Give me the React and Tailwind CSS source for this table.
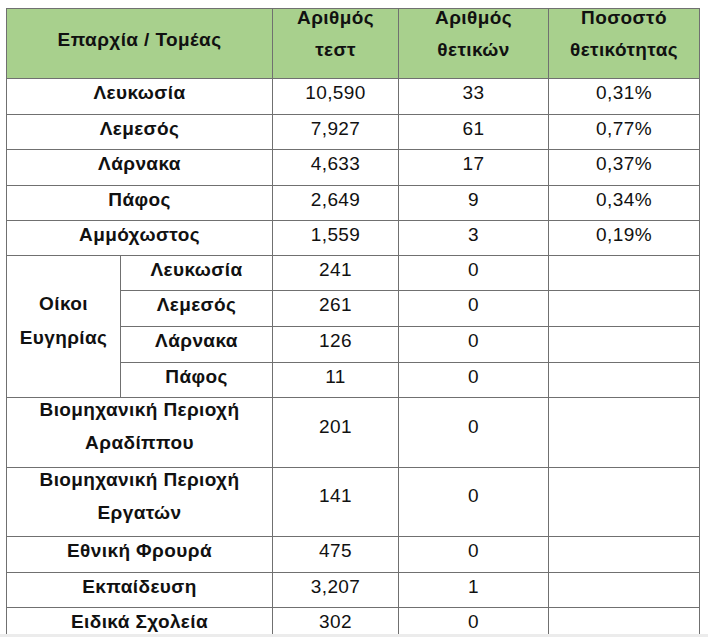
import React from 'react';

const rows = [
  { name: 'Λευκωσία', tests: '10,590', pos: '33', rate: '0,31%', h: 'h-[36px]' },
  { name: 'Λεμεσός', tests: '7,927', pos: '61', rate: '0,77%', h: 'h-[35px]' },
  { name: 'Λάρνακα', tests: '4,633', pos: '17', rate: '0,37%', h: 'h-[36px]' },
  { name: 'Πάφος', tests: '2,649', pos: '9', rate: '0,34%', h: 'h-[35px]' },
  { name: 'Αμμόχωστος', tests: '1,559', pos: '3', rate: '0,19%', h: 'h-[35px]' },
];

const homes = [
  { name: 'Λευκωσία', tests: '241', pos: '0', h: 'h-[35px]' },
  { name: 'Λεμεσός', tests: '261', pos: '0', h: 'h-[36px]' },
  { name: 'Λάρνακα', tests: '126', pos: '0', h: 'h-[36px]' },
  { name: 'Πάφος', tests: '11', pos: '0', h: 'h-[35px]' },
];

const areas = [
  { top: 'Βιομηχανική Περιοχή', bottom: 'Αραδίππου', tests: '201', pos: '0', h: 'h-[70px]' },
  { top: 'Βιομηχανική Περιοχή', bottom: 'Εργατών', tests: '141', pos: '0', h: 'h-[69px]' },
];

const others = [
  { name: 'Εθνική Φρουρά', tests: '475', pos: '0', h: 'h-[36px]' },
  { name: 'Εκπαίδευση', tests: '3,207', pos: '1', h: 'h-[35px]' },
  { name: 'Ειδικά Σχολεία', tests: '302', pos: '0', h: 'h-[36px]' },
];

// shared cell look
const cell = 'border border-[#707070] p-0 pb-[7px] text-center align-middle leading-[22px]';
const bold = 'font-bold';

const TwoLine = ({ top, bottom, gap = 'mt-[14px]', lh = 'leading-[20px]' }) => (
  <div className="flex flex-col items-center">
    <div className={lh}>{top}</div>
    <div className={`${gap} ${lh}`}>{bottom}</div>
  </div>
);

export default function App() {
  return (
    <div
      className="flex h-[637px] w-[708px] flex-col overflow-hidden bg-white text-[19px] tracking-[0.4px] text-[#111]"
      style={{ fontFamily: '"Liberation Sans", Arial, sans-serif' }}
    >
      <div className="h-[634px] overflow-hidden pl-[6px] pt-[8px]">
        <table className="w-[693px] table-fixed border-collapse">
          <colgroup>
            <col className="w-[114px]" />
            <col className="w-[152px]" />
            <col className="w-[126px]" />
            <col className="w-[150px]" />
            <col className="w-[151px]" />
          </colgroup>
          <thead>
            <tr className="h-[70px] bg-[#a8d08d]">
              <th colSpan={2} className={`${cell} ${bold} pb-[4px]`}>
                Επαρχία / Τομέας
              </th>
              <th className={`${cell} ${bold} pb-0 align-top`}>
                <TwoLine top="Αριθμός" bottom="τεστ" lh="leading-[18px]" />
              </th>
              <th className={`${cell} ${bold} pb-0 align-top`}>
                <TwoLine top="Αριθμός" bottom="θετικών" lh="leading-[18px]" />
              </th>
              <th className={`${cell} ${bold} pb-0 align-top`}>
                <TwoLine top="Ποσοστό" bottom="θετικότητας" lh="leading-[18px]" />
              </th>
            </tr>
          </thead>
          <tbody>
            {rows.map((r) => (
              <tr key={r.name} className={r.h}>
                <td colSpan={2} className={`${cell} ${bold}`}>{r.name}</td>
                <td className={cell}>{r.tests}</td>
                <td className={cell}>{r.pos}</td>
                <td className={cell}>{r.rate}</td>
              </tr>
            ))}
            {homes.map((r, i) => (
              <tr key={'h' + r.name} className={r.h}>
                {i === 0 && (
                  <td rowSpan={4} className={`${cell} ${bold} pb-[12px]`}>
                    <TwoLine top="Οίκοι" bottom="Ευγηρίας" />
                  </td>
                )}
                <td className={`${cell} ${bold}`}>{r.name}</td>
                <td className={cell}>{r.tests}</td>
                <td className={cell}>{r.pos}</td>
                <td className={cell}></td>
              </tr>
            ))}
            {areas.map((r) => (
              <tr key={r.bottom} className={r.h}>
                <td colSpan={2} className={`${cell} ${bold} pb-0 pt-[2px] align-top`}>
                  <TwoLine top={r.top} bottom={r.bottom} gap="mt-[13px]" />
                </td>
                <td className={`${cell} pb-[12px]`}>{r.tests}</td>
                <td className={`${cell} pb-[12px]`}>{r.pos}</td>
                <td className={cell}></td>
              </tr>
            ))}
            {others.map((r) => (
              <tr key={r.name} className={r.h}>
                <td colSpan={2} className={`${cell} ${bold}`}>{r.name}</td>
                <td className={cell}>{r.tests}</td>
                <td className={cell}>{r.pos}</td>
                <td className={cell}></td>
              </tr>
            ))}
          </tbody>
        </table>
      </div>
      <div className="h-[3px] bg-[#ececec]" />
    </div>
  );
}
